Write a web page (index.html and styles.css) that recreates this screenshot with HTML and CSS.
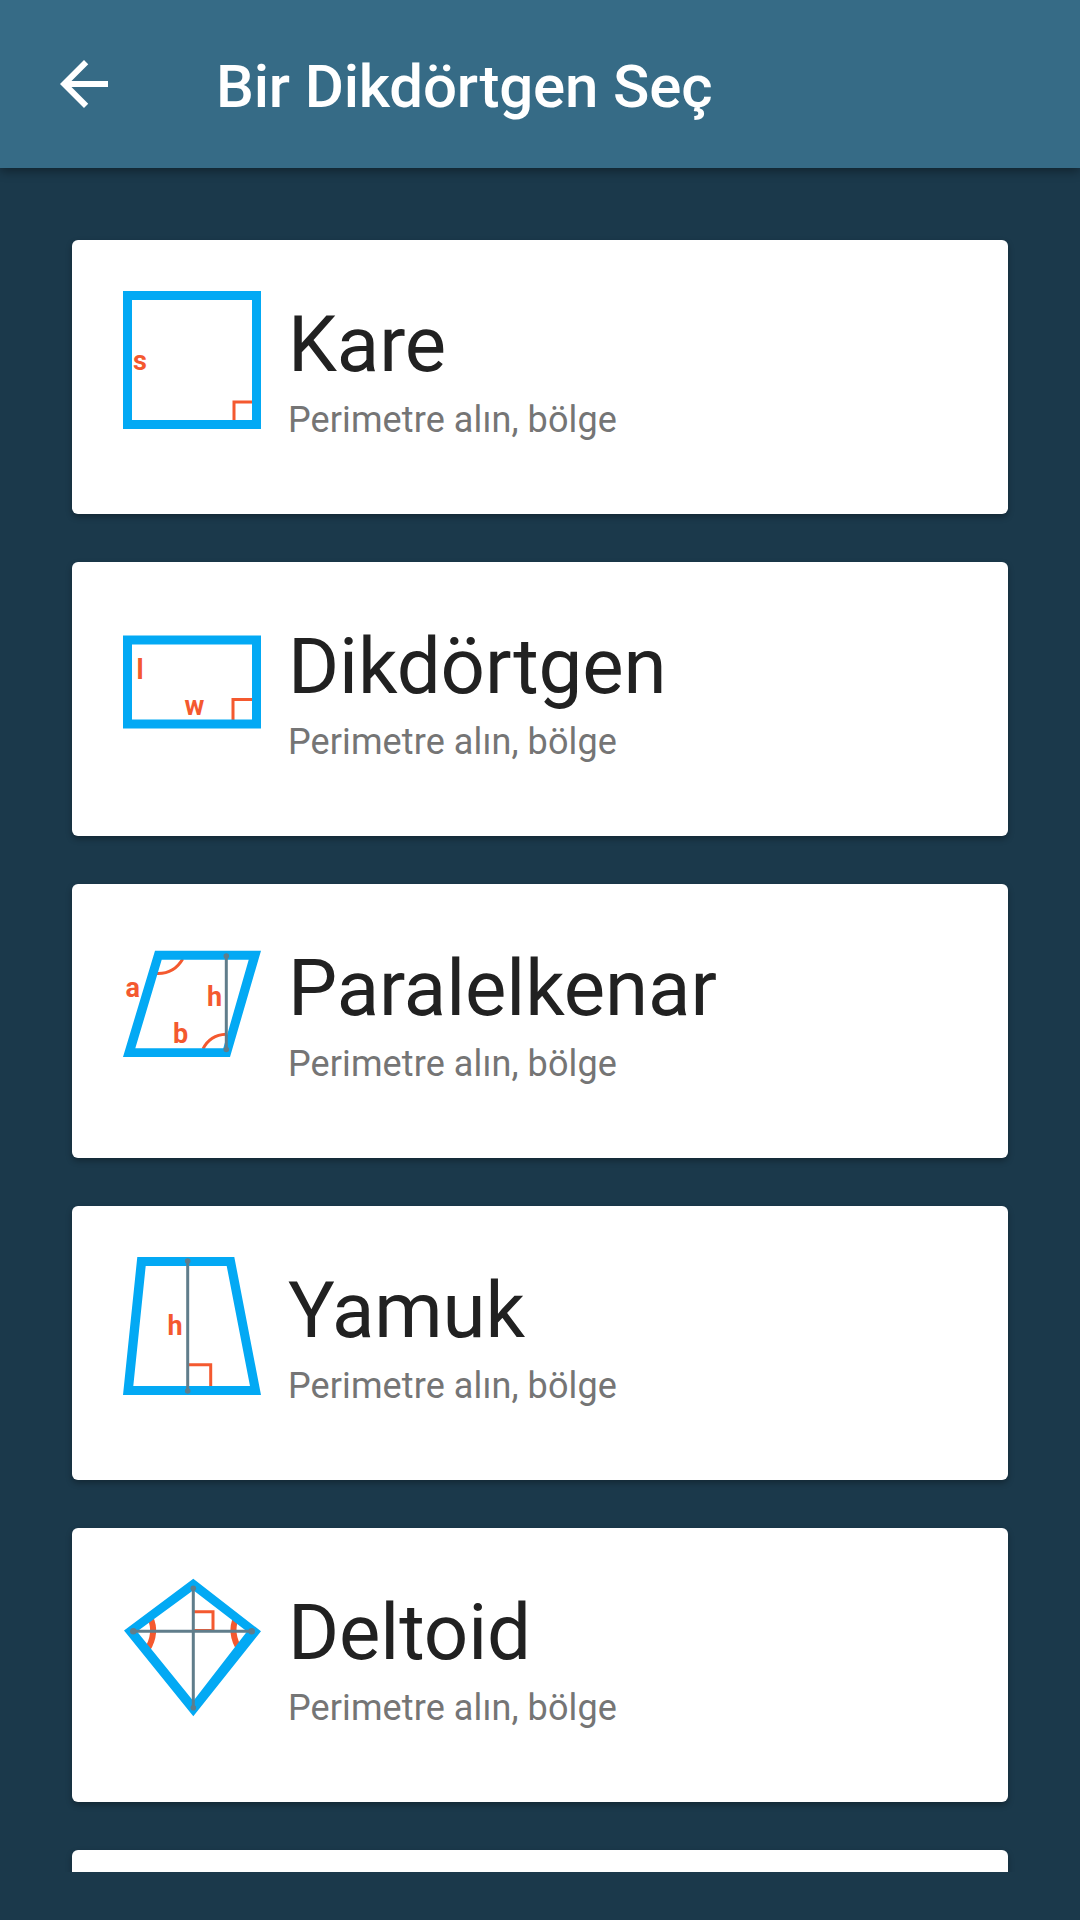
FILE: index.html
```
<!DOCTYPE html>
<html lang="tr">
<head>
    <meta charset="UTF-8">
    <meta name="viewport" content="width=device-width, initial-scale=1.0">
    <title>Bir Dikdörtgen Seç</title>
    <link rel="stylesheet" href="styles.css">
</head>
<body>
    <header class="toolbar">
        <svg class="back" viewBox="0 0 24 24">
            <path d="M20 11H7.83l5.59-5.59L12 4l-8 8 8 8 1.41-1.41L7.83 13H20v-2z"/>
        </svg>
        <h1 class="toolbar-title">Bir Dikdörtgen Seç</h1>
    </header>
    <main class="list">
        <!-- Square -->
        <div class="card">
            <svg class="shape" viewBox="0 0 138 138">
                <path class="mark" d="M111 129V111H129"/>
                <path class="outline" d="M0 0H138V138H0ZM9 9V129H129V9Z"/>
                <text x="10" y="78.5">s</text>
            </svg>
            <div class="info">
                <h2 class="name">Kare</h2>
                <p class="detail">Perimetre alın, bölge</p>
            </div>
        </div>
        <!-- Rectangle -->
        <div class="card">
            <svg class="shape" viewBox="0 0 138 138">
                <path class="mark" d="M110 107V86.5H129"/>
                <path class="outline" d="M0 22.500H138V115.500H0ZM9 31.500V106.500H129V31.500Z"/>
                <text x="13.500" y="66">l</text>
                <text x="61.500" y="102">w</text>
            </svg>
            <div class="info">
                <h2 class="name">Dikdörtgen</h2>
                <p class="detail">Perimetre alın, bölge</p>
            </div>
        </div>
        <!-- Parallelogram -->
        <div class="card">
            <svg class="shape" viewBox="0 0 138 138">
                <path class="mark" d="M34 38.500Q51 39 59.700 24M80 114Q87 100 103 99.300"/>
                <path class="outline" d="M32 15.700H138L107 122H0ZM38.700 24.700L12.300 113.300H100.300L125.700 24.700Z"/>
                <path class="height" d="M103.300 21V114.500"/>
                <circle class="dot" cx="103.300" cy="21" r="2.800"/>
                <circle class="dot" cx="103.300" cy="114.500" r="2.800"/>
                <text x="2.500" y="61.500">a</text>
                <text x="84" y="71">h</text>
                <text x="50" y="108">b</text>
            </svg>
            <div class="info">
                <h2 class="name">Paralelkenar</h2>
                <p class="detail">Perimetre alın, bölge</p>
            </div>
        </div>
        <!-- Trapezoid -->
        <div class="card">
            <svg class="shape" viewBox="0 0 138 138">
                <path class="mark" d="M65 107.700H87.700V129"/>
                <path class="outline" d="M14.300 0H111.300L138 138H0ZM22.700 9L10.300 129H127L103.700 9Z"/>
                <path class="height" d="M64.700 4V134"/>
                <circle class="dot" cx="64.700" cy="4" r="2.800"/>
                <circle class="dot" cx="64.700" cy="134" r="2.800"/>
                <text x="44.500" y="77.500">h</text>
            </svg>
            <div class="info">
                <h2 class="name">Yamuk</h2>
                <p class="detail">Perimetre alın, bölge</p>
            </div>
        </div>
        <!-- Kite -->
        <div class="card">
            <svg class="shape" viewBox="0 0 138 138">
                <path class="mark" d="M70 32.700H90V51.500H70"/>
                <path class="mark thick" d="M27 38Q34.500 54 24 71M113.500 38Q106 54 117 71"/>
                <path class="outline" d="M70.300 -.3L138 52.300L70.300 137.300L1 51.500ZM70.300 11.300L14 52.500L70.300 122L124 52.500Z"/>
                <path class="height" d="M10.300 52.300H128.700M70.300 9.300V128.700"/>
                <circle class="dot" cx="10.300" cy="52.300" r="3.300"/>
                <circle class="dot" cx="128.700" cy="52.300" r="3.300"/>
                <circle class="dot" cx="70.300" cy="9.300" r="2.800"/>
                <circle class="dot" cx="70.300" cy="128.700" r="2.800"/>
            </svg>
            <div class="info">
                <h2 class="name">Deltoid</h2>
                <p class="detail">Perimetre alın, bölge</p>
            </div>
        </div>
        <div class="card"></div>
    </main>
</body>
</html>
```
FILE: styles.css
```
* {
    box-sizing: border-box;
}
body {
    display: flex;
    flex-direction: column;
    height: 1920px;
    margin: 0;
    padding-bottom: 48px;
    overflow: hidden;
    background: #1b394b;
    font-family: Roboto, sans-serif;
}
.toolbar {
    display: flex;
    flex: none;
    align-items: center;
    gap: 96px;
    height: 168px;
    padding: 0 48px;
    background: #366b86;
    color: #fff;
    box-shadow: 0 3px 10px rgba(0, 0, 0, 0.4);
    z-index: 1;
}
.back {
    width: 72px;
    height: 72px;
    fill: #fff;
}
.toolbar-title {
    margin: 0;
    padding-top: 6px;
    font-size: 60px;
    font-weight: 500;
    letter-spacing: -0.16px;
    line-height: 70px;
}
.list {
    display: flex;
    flex: 1;
    flex-direction: column;
    gap: 48px;
    min-height: 0;
    padding: 72px 72px 0;
    overflow: hidden;
}
.card {
    display: flex;
    flex: none;
    gap: 27px;
    height: 274px;
    padding: 51px;
    background: #fff;
    border-radius: 6px;
    box-shadow: 0 3px 6px rgba(0, 0, 0, 0.3);
}
.shape {
    flex: none;
    width: 138px;
    height: 138px;
    overflow: visible;
}
.shape text {
    fill: #f4592f;
    font-size: 27px;
    font-weight: 700;
}
.outline {
    fill: #03a9f4;
    fill-rule: evenodd;
}
.mark {
    fill: none;
    stroke: #f4592f;
    stroke-width: 3;
}
.thick {
    stroke-width: 6;
}
.height {
    fill: none;
    stroke: #607d8b;
    stroke-width: 3;
}
.dot {
    fill: #607d8b;
}
.info {
    padding-top: 8px;
}
.name {
    margin: 0;
    color: #212121;
    font-size: 78px;
    font-weight: 400;
    letter-spacing: -0.1px;
    line-height: 92px;
}
.detail {
    margin: 8px 0 0;
    color: #757575;
    font-size: 36px;
    letter-spacing: 0.1px;
    line-height: 42px;
}
```
